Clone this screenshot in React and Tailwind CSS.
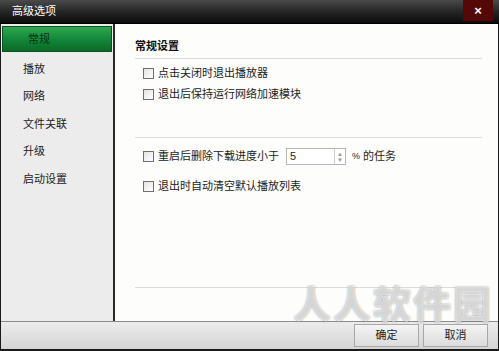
import React from 'react';

const FONT = { fontFamily: '"Liberation Sans", "Noto Sans CJK SC", sans-serif' };

const menu = ['播放', '网络', '文件关联', '升级', '启动设置'];

const Check = ({ label }) => (
    <label className="flex items-center gap-[4px] h-[18px] text-[11px] text-[#222]">
        <span className="w-[11px] h-[11px] border border-[#6f6f6f] bg-gradient-to-br from-[#e4e4e4] to-white" />
        {label}
    </label>
);

export default function App() {
    return (
        <div className="relative w-[499px] h-[351px] bg-[#1a1a1a] flex flex-col overflow-hidden" style={FONT}>
            <div className="h-[24px] flex items-center justify-between bg-gradient-to-b from-[#4a4a4a] via-[#262626] to-[#0c0c0c] border-b border-black">
                <span className="pl-[12px] text-[11px] text-white">高级选项</span>
                <div className="mr-[6px] w-[30px] h-[21px] self-start bg-[#550808] flex items-center justify-center text-white font-bold text-[13px] leading-none">×</div>
            </div>

            <div className="flex-1 flex mx-[1px] border-b border-[#8a8a8a]">
                <div className="w-[114px] bg-[#ececec] border-r-2 border-[#2a2a2a] pt-[2px] px-[1px]">
                    <div className="h-[26px] flex items-center pl-[25px] bg-gradient-to-b from-[#2fa64f] via-[#12883a] to-[#0a6a28] border border-[#0c4f20]">
                        <span className="text-[11px] text-green-950">常规</span>
                    </div>
                    <div className="flex flex-col pl-[21px] pt-[3px]">
                        {menu.map(m => (
                            <div key={m} className="h-[27.5px] flex items-center text-[11px] text-[#222]">{m}</div>
                        ))}
                    </div>
                </div>

                <div className="flex-1 bg-[#fdfdfc] pl-[20px] pr-[16px] pt-[14px] flex flex-col">
                    <div className="text-[11px] font-bold text-[#111] pb-[3px] border-b border-[#dcdcdc]">常规设置</div>
                    <div className="pl-[8px] pt-[6px] flex flex-col gap-[3px]">
                        <Check label="点击关闭时退出播放器" />
                        <Check label="退出后保持运行网络加速模块" />
                    </div>
                    <div className="mt-[33px] border-b border-[#dcdcdc]" />
                    <div className="pl-[8px] pt-[10px] flex flex-col gap-[12px]">
                        <div className="flex items-center h-[18px] text-[11px] text-[#222]">
                            <Check label="重启后删除下载进度小于" />
                            <div className="ml-[7px] w-[60px] h-[17px] border border-[#b5b5b5] bg-white flex items-center justify-between">
                                <span className="pl-[3px] text-[11px] leading-none">5</span>
                                <div className="w-[11px] h-full border-l border-[#ccc] flex flex-col text-[6px] text-[#999] leading-none items-center justify-center">
                                    <span>▲</span>
                                    <span>▼</span>
                                </div>
                            </div>
                            <span className="ml-[6px] text-[9px]">%</span>
                            <span className="ml-[3px]">的任务</span>
                        </div>
                        <Check label="退出时自动清空默认播放列表" />
                    </div>
                    <div className="mt-auto mb-[33px] border-b border-[#dcdcdc]" />
                </div>
            </div>

            <div className="h-[27px] mx-[1px] mb-[2px] flex items-center justify-end gap-[4px] pr-[10px] bg-gradient-to-b from-[#ececec] to-[#d4d4d4]">
                <button className="w-[65px] h-[23px] text-[11px] text-[#222] border border-[#a8a8a8] bg-gradient-to-b from-[#f4f4f4] to-[#dcdcdc]">确定</button>
                <button className="w-[65px] h-[23px] text-[11px] text-[#222] border border-[#a8a8a8] bg-gradient-to-b from-[#f4f4f4] to-[#dcdcdc]">取消</button>
            </div>

            <div className="absolute right-[6px] bottom-[27px] text-[38px] leading-none font-black text-white/60 tracking-[2px] pointer-events-none" style={{ textShadow: '0 0 2px rgba(110,110,110,0.7)' }}>
                人人软件园
            </div>
        </div>
    );
}
